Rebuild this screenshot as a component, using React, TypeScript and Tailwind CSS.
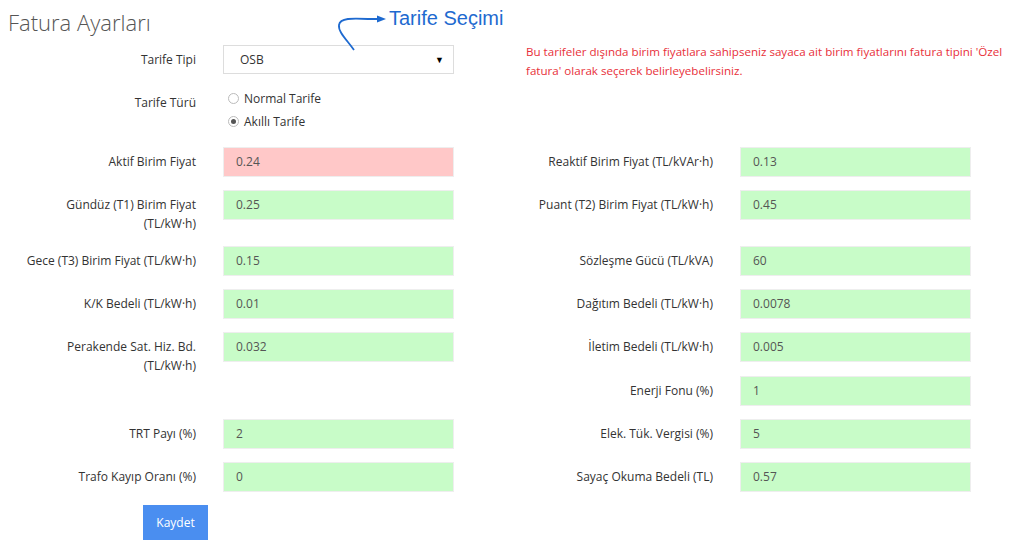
const font = { fontFamily: '"Open Sans", "Liberation Sans", sans-serif' };

type Field = { label: string; value: string; red?: boolean };

const Label = ({ text, left }: { text: string; left?: boolean }) => (
  <div className="w-[196px] flex justify-end">
    <div className={`${left ? "w-[181px]" : "w-[196px]"} pt-[5px] text-right text-[12px] leading-[19px] text-[#333]`}>
      {text}
    </div>
  </div>
);

const Input = ({ value, red }: { value: string; red?: boolean }) => (
  <div
    className={`w-[231px] h-[30px] flex items-center px-3 text-[12px] text-[#555] border border-[#eee] ${
      red ? "bg-[#ffc8c8]" : "bg-[#c8fcc8]"
    }`}
  >
    {value}
  </div>
);

const Pair = ({ field, left }: { field?: Field; left?: boolean }) =>
  field ? (
    <div className="flex gap-[27px] items-start">
      <Label text={field.label} left={left} />
      <Input value={field.value} red={field.red} />
    </div>
  ) : (
    <div className="w-[454px]" />
  );

const rows: { h: string; l?: Field; r?: Field }[] = [
  {
    h: "h-[30px]",
    l: { label: "Aktif Birim Fiyat", value: "0.24", red: true },
    r: { label: "Reaktif Birim Fiyat (TL/kVAr·h)", value: "0.13" },
  },
  {
    h: "h-[43px]",
    l: { label: "Gündüz (T1) Birim Fiyat (TL/kW·h)", value: "0.25" },
    r: { label: "Puant (T2) Birim Fiyat (TL/kW·h)", value: "0.45" },
  },
  {
    h: "h-[30px]",
    l: { label: "Gece (T3) Birim Fiyat (TL/kW·h)", value: "0.15" },
    r: { label: "Sözleşme Gücü (TL/kVA)", value: "60" },
  },
  {
    h: "h-[30px]",
    l: { label: "K/K Bedeli (TL/kW·h)", value: "0.01" },
    r: { label: "Dağıtım Bedeli (TL/kW·h)", value: "0.0078" },
  },
  {
    h: "h-[31px]",
    l: { label: "Perakende Sat. Hiz. Bd. (TL/kW·h)", value: "0.032" },
    r: { label: "İletim Bedeli (TL/kW·h)", value: "0.005" },
  },
  { h: "h-[30px]", r: { label: "Enerji Fonu (%)", value: "1" } },
  {
    h: "h-[30px]",
    l: { label: "TRT Payı (%)", value: "2" },
    r: { label: "Elek. Tük. Vergisi (%)", value: "5" },
  },
  {
    h: "h-[30px]",
    l: { label: "Trafo Kayıp Oranı (%)", value: "0" },
    r: { label: "Sayaç Okuma Bedeli (TL)", value: "0.57" },
  },
];

const Radio = ({ checked, text }: { checked?: boolean; text: string }) => (
  <div className="flex items-center gap-[5px] h-[23px] pl-[5px]">
    <span className="w-[11px] h-[11px] rounded-full border border-[#bbb] bg-white flex items-center justify-center">
      {checked && <span className="w-[5px] h-[5px] rounded-full bg-[#555]" />}
    </span>
    <span className="text-[12px] text-[#333]">{text}</span>
  </div>
);

export default function App() {
  return (
    <div className="relative w-[1024px] h-[541px] bg-white overflow-hidden" style={font}>
      <h1 className="pl-2 pt-[7px] h-[45px] text-[22px] font-light leading-[30px] text-[#555]">Fatura Ayarları</h1>

      {/* annotation */}
      <svg className="absolute left-0 top-0" width="520" height="60" viewBox="0 0 520 60">
        <path
          d="M354 50 C347 40 338 32 339 25 C340 18 352 18 368 19 L378 19"
          fill="none"
          stroke="#1e6ad0"
          strokeWidth="1.8"
        />
        <path d="M377 15.5 L386 19 L377 22.5 Z" fill="#1e6ad0" />
      </svg>
      <div
        className="absolute left-[389px] top-[6px] text-[20px] leading-[24px] text-[#1e6ad0]"
        style={{ fontFamily: '"Liberation Sans", Arial, sans-serif' }}
      >
        Tarife Seçimi
      </div>

      <div className="flex">
        <div className="flex flex-col">
          <div className="flex gap-[27px] items-center h-[29px]">
            <div className="w-[196px] text-right text-[12px] text-[#333]">Tarife Tipi</div>
            <div className="w-[231px] h-[29px] flex items-center justify-between pl-4 pr-[9px] border border-[#ddd] bg-white text-[12px] text-[#333]">
              <span>OSB</span>
              <span className="text-[9px] text-black">▼</span>
            </div>
          </div>
          <div className="flex gap-[27px] mt-[13px]">
            <div className="w-[196px] pt-[6px] text-right text-[12px] leading-[19px] text-[#333]">Tarife Türü</div>
            <div className="flex flex-col">
              <Radio text="Normal Tarife" />
              <Radio text="Akıllı Tarife" checked />
            </div>
          </div>
        </div>
        <div className="ml-[72px] w-[485px] -mt-[3px] text-[11.6px] leading-[19px] text-[#e8303a]">
          Bu tarifeler dışında birim fiyatlara sahipseniz sayaca ait birim fiyatlarını fatura tipini 'Özel fatura'
          olarak seçerek belirleyebelirsiniz.
        </div>
      </div>

      <div className="flex flex-col mt-[14px]">
        {rows.map((row, i) => (
          <div key={i} className={`flex gap-[63px] mb-[13px] ${row.h}`}>
            <Pair field={row.l} left />
            <Pair field={row.r} />
          </div>
        ))}
      </div>

      <div className="pl-[143px]">
        <button className="w-[65px] h-[35px] bg-[#4a8ef0] text-white text-[12px]">Kaydet</button>
      </div>
    </div>
  );
}
